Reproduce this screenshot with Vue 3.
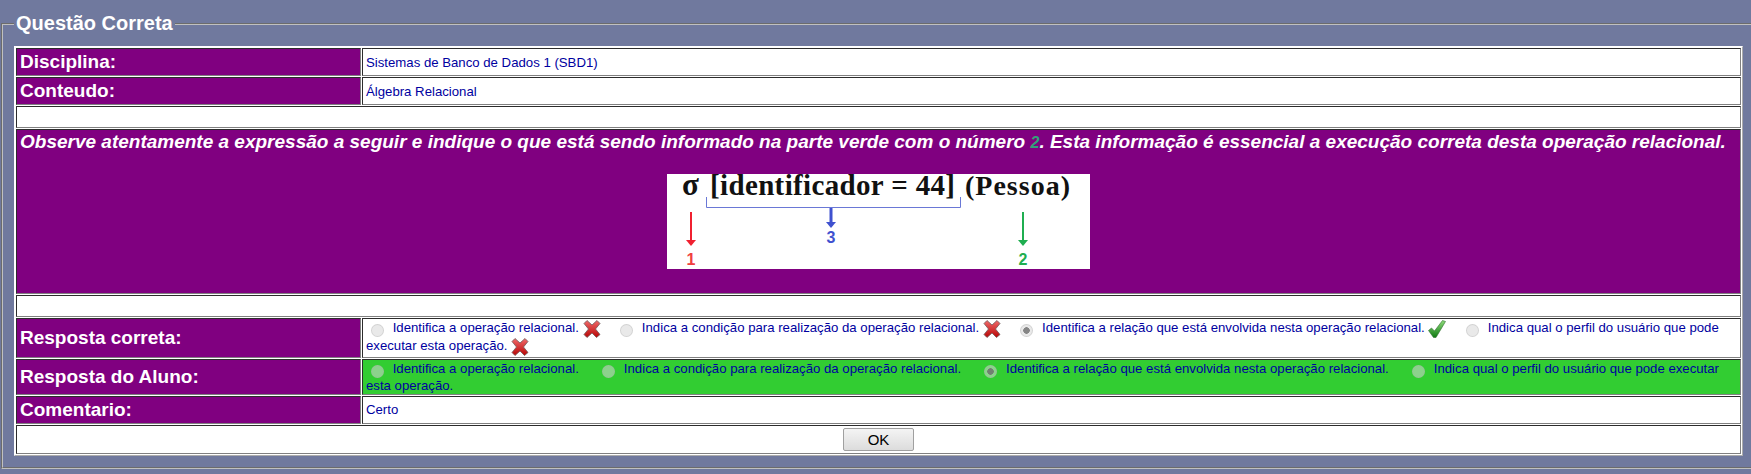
<script setup>
const options = [
  { text: 'Identifica a operação relacional.', ok: false },
  { text: 'Indica a condição para realização da operação relacional.', ok: false },
  { text: 'Identifica a relação que está envolvida nesta operação relacional.', ok: true, checked: true },
  { text: 'Indica qual o perfil do usuário que pode executar esta operação.', ok: false },
]
</script>

<template>
  <fieldset class="box">
    <legend>Questão Correta</legend>
    <table class="quiz">
      <tbody>
        <tr>
          <td class="label">Disciplina:</td>
          <td class="value">Sistemas de Banco de Dados 1 (SBD1)</td>
        </tr>
        <tr>
          <td class="label">Conteudo:</td>
          <td class="value">Álgebra Relacional</td>
        </tr>
        <tr><td colspan="2" class="empty">&nbsp;</td></tr>
        <tr>
          <td colspan="2" class="question">
            <div>Observe atentamente a expressão a seguir e indique o que está sendo informado na parte verde com o número <span class="num">2</span>. Esta informação é essencial a execução correta desta operação relacional.</div>
            <svg class="expr" width="423" height="95" viewBox="0 0 423 95">
              <rect width="423" height="95" fill="#fff" />
              <text x="15" y="21" class="serif" font-size="31" fill="#111">σ</text>
              <text x="43" y="21" class="serif" font-size="29" font-weight="bold" fill="#111" textLength="245">[identificador = 44]</text>
              <text x="298" y="21" class="serif" font-size="28" fill="#111" textLength="105">(Pessoa)</text>
              <path d="M39.5 23v10.5h254v-10.5" fill="none" stroke="#6a78d6" stroke-width="1" />
              <path d="M164 34v15" stroke="#3f51cf" stroke-width="3" />
              <path d="M159 48h10l-5 6z" fill="#3f51cf" />
              <text x="164" y="69" class="sans" font-size="16" font-weight="bold" fill="#3f51cf" text-anchor="middle">3</text>
              <path d="M24 38v29" stroke="#f02030" stroke-width="2" />
              <path d="M19 66h10l-5 6z" fill="#f02030" />
              <text x="24" y="91" class="sans" font-size="16" font-weight="bold" fill="#f04040" text-anchor="middle">1</text>
              <path d="M356 38v29" stroke="#1fae50" stroke-width="2" />
              <path d="M351 66h10l-5 6z" fill="#1fae50" />
              <text x="356" y="91" class="sans" font-size="16" font-weight="bold" fill="#1fae50" text-anchor="middle">2</text>
            </svg>
          </td>
        </tr>
        <tr><td colspan="2" class="empty">&nbsp;</td></tr>
        <tr>
          <td class="label">Resposta correta:</td>
          <td class="value">
            <template v-for="o in options" :key="o.text">
              <input type="radio" disabled :checked="o.checked" />
              {{ o.text }}
              <svg v-if="o.ok" class="mark" width="18" height="18" viewBox="0 0 18 18">
                <defs>
                  <linearGradient id="okFill" x1="0" y1="0" x2="0" y2="1">
                    <stop offset="0" stop-color="#8fdc7a" />
                    <stop offset="1" stop-color="#0f7a12" />
                  </linearGradient>
                </defs>
                <path d="M0.5 10.5l3-2.5 3 3 8-10.5 3 1-9.5 16h-2.5z" fill="url(#okFill)" stroke="#2f6f2f" stroke-width=".6" />
              </svg>
              <svg v-else class="mark" width="18" height="18" viewBox="0 0 18 18">
                <defs>
                  <linearGradient id="noFill" x1="0" y1="0" x2="0" y2="1">
                    <stop offset="0" stop-color="#f06a6a" />
                    <stop offset="1" stop-color="#b80606" />
                  </linearGradient>
                </defs>
                <path d="M1 3.5l3-3 5 4.500 5-4.500 3 3-4.500 5.500 4.500 5.500-3.500 3-4.500-4.500-5 4.500-3-3 4.500-5.500z" fill="url(#noFill)" stroke="#6e5a5a" stroke-width=".8" />
              </svg>
              &nbsp;&nbsp;
            </template>
          </td>
        </tr>
        <tr>
          <td class="label">Resposta do Aluno:</td>
          <td class="value green">
            <template v-for="o in options" :key="o.text">
              <input type="radio" disabled :checked="o.checked" />
              {{ o.text }}
              &nbsp;&nbsp;&nbsp;
            </template>
          </td>
        </tr>
        <tr>
          <td class="label">Comentario:</td>
          <td class="value">Certo</td>
        </tr>
        <tr>
          <td colspan="2" class="actions"><button type="button">OK</button></td>
        </tr>
      </tbody>
    </table>
  </fieldset>
</template>

<style>
html, body {
  background: #70799e;
  overflow: hidden;
}
</style>

<style scoped>
.box {
  margin: 12px -6px 0 1px;
  padding: 11px 12px 11px 11px;
  border: 2px groove #c0c0c0;
  font-family: "Liberation Sans", Arial, sans-serif;
  color: #0000a0;
}

legend {
  padding: 0 2px;
  font-size: 20px;
  font-weight: bold;
  color: #fff;
}

.quiz {
  width: 100%;
  border: 1px outset #fff;
  border-spacing: 1px;
  background: #fff;
}

.quiz td {
  border: 1px inset #808080;
  padding: 1px 3px;
}

.quiz .label {
  width: 337px;
  padding: 2px 3px;
  background: #800080;
  color: #fff;
  font-size: 19px;
  font-weight: bold;
}

.value {
  background: #fff;
  font-size: 13.2px;
}

.green {
  background: #32cd32;
}

.empty {
  height: 18px;
  background: #fff;
  font-size: 13px;
}

.quiz .question {
  background: #800080;
  color: #fff;
  font-size: 19px;
  font-weight: bold;
  font-style: italic;
  padding: 1px 3px 24px;
}

.num {
  color: #32a07a;
  font-size: 16px;
}

.expr {
  display: block;
  margin: 21px auto 0;
  font-style: normal;
}

.serif {
  font-family: "Liberation Serif", serif;
}

.sans {
  font-family: "Liberation Sans", sans-serif;
}

.mark {
  vertical-align: middle;
}

input[type="radio"] {
  appearance: none;
  box-sizing: border-box;
  width: 13px;
  height: 13px;
  margin: 3px 5px 0 5px;
  vertical-align: middle;
  border-radius: 50%;
  border: 1px solid rgba(170, 170, 170, 0.35);
  background: rgba(215, 215, 215, 0.55);
}

input[type="radio"]:checked {
  background: radial-gradient(circle, rgba(120, 120, 120, 0.9) 0 3px, rgba(215, 215, 215, 0.55) 3.5px);
}

.quiz .actions {
  padding: 2px;
  background: #fff;
}

button {
  display: block;
  width: 71px;
  height: 23px;
  margin: 0 auto;
  padding: 0;
  font-family: "Liberation Sans", sans-serif;
  font-size: 15px;
  color: #000;
  background: linear-gradient(#f4f4f4, #dcdcdc);
  border: 1px solid #a0a0a0;
  border-radius: 2px;
}
</style>
